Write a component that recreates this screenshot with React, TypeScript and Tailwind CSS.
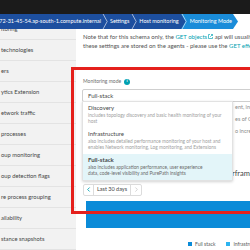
import { ChevronLeft, ChevronRight } from 'lucide-react'

const sideItems = [
  'technologies',
  'ers',
  'ytics Extension',
  'etwork traffic',
  'processes',
  'oup monitoring',
  'oup detection flags',
  're process grouping',
  'ailability',
  'stance snapshots'
]

const options = [
  {
    title: 'Discovery',
    lines: ['includes topology discovery and basic health monitoring of your', 'host'],
    active: false
  },
  {
    title: 'Infrastructure',
    lines: [
      'also includes detailed performance monitoring of your host and',
      'enables Network monitoring, Log monitoring, and Extensions'
    ],
    active: false
  },
  {
    title: 'Full-stack',
    lines: ['also includes application performance, user experience', 'data, code-level visibility and PurePath insights'],
    active: true
  }
]

function Sep({ from, to }: { from: string; to: string }) {
  return (
    <svg width="6" height="15" viewBox="0 0 6 15" className="shrink-0 block">
      <rect width="6" height="15" fill={to} />
      <polygon points="0,0 4.5,7.5 0,15" fill={from} />
      <polyline points="0.8,-0.5 5.2,7.5 0.8,15.5" fill="none" stroke="rgba(255,255,255,0.75)" strokeWidth="0.8" />
    </svg>
  )
}

function ExtIcon() {
  return (
    <svg width="5" height="5" viewBox="0 0 10 10" className="inline-block ml-[1px] mb-[1px]">
      <path d="M4 1H1v8h8V6M6 1h3v3M9 1 4.5 5.5" fill="none" stroke="#00a1b2" strokeWidth="1.3" />
    </svg>
  )
}

export default function App() {
  return (
    <div className="relative w-[250px] h-[250px] overflow-hidden bg-white font-['Lato',sans-serif] text-[#454646]">
      <div className="h-[14px] bg-[#1b1b1b]" />

      {/* breadcrumb */}
      <div className="flex h-[15px] text-[5.5px] leading-[15px] text-white whitespace-nowrap">
        <div className="w-[102px] shrink-0 overflow-hidden flex justify-end pr-[1px] bg-[#1d4f9f]">
          ip-172-31-45-54.ap-south-1.compute.internal
        </div>
        <Sep from="#1d4f9f" to="#1d4f9f" />
        <div className="pl-[2px] pr-[2px] bg-[#1d4f9f]">Settings</div>
        <Sep from="#1d4f9f" to="#1d4f9f" />
        <div className="pl-[2px] pr-[2px] bg-[#1d4f9f]">Host monitoring</div>
        <Sep from="#1d4f9f" to="#1a8cd9" />
        <div className="pl-[3px] pr-[1px] bg-[#1a8cd9]">Monitoring Mode</div>
        <svg width="6" height="15" viewBox="0 0 6 15" className="shrink-0 block">
          <polygon points="0,0 5,7.5 0,15" fill="#1a8cd9" />
        </svg>
      </div>

      <div className="flex h-[221px]">
        {/* sidebar */}
        <div className="w-[76px] shrink-0 bg-[#f2f2f2] text-[5.8px] whitespace-nowrap overflow-hidden">
          <div className="h-[11px] overflow-hidden border-b border-[#e3e3e3]">
            <div className="-mt-[10px] h-[21px] flex items-center pl-[1px]">itoring</div>
          </div>
          {sideItems.map((s) => (
            <div key={s} className="h-[21px] flex items-center pl-[1px] border-b border-[#e3e3e3]">
              {s}
            </div>
          ))}
        </div>

        {/* main */}
        <div className="w-[260px] shrink-0 pl-[6px] pt-[3px]">
          <div className="pl-[1px] text-[6px] leading-[9px] text-[#525252] whitespace-nowrap">
            <div>
              Note that for this schema only, the <span className="text-[#00a1b2]">GET objects</span>
              <ExtIcon /> api will usually not return
            </div>
            <div>
              these settings are stored on the agents - please use the{' '}
              <span className="text-[#00a1b2]">GET effective values</span>
            </div>
          </div>

          <div className="mt-[28px] pl-[1px] flex items-center gap-[3px] text-[5px] text-[#6f6f6f]">
            <span>Monitoring mode</span>
            <span className="w-[6px] h-[6px] rounded-full bg-[#00a1b2] text-white text-[4.5px] font-bold flex items-center justify-center">
              i
            </span>
          </div>

          <div className="relative mt-[3px]">
            <div className="h-[13px] border border-[#cfcfcf] rounded-[2px] pl-[5px] flex items-center text-[6px] text-[#454646]">
              Full-stack
            </div>

            {/* content behind dropdown */}
            <div className="text-[5.5px] text-[#8a8a8a] whitespace-nowrap">
              <div className="flex h-[12px] items-center">
                <span className="w-[153px] shrink-0" />
                <span>ent, including</span>
              </div>
              <div className="flex h-[12px] items-center">
                <span className="w-[153px] shrink-0" />
                <span>es of OneAgent</span>
              </div>
              <div className="flex h-[12px] items-center">
                <span className="w-[153px] shrink-0" />
                <span>o increase</span>
              </div>
            </div>
            <div className="mt-[31px] flex h-[10px] items-center text-[7.5px] text-[#454646] whitespace-nowrap">
              <span className="w-[150px] shrink-0" />
              <span>rframe</span>
            </div>

            <div className="mt-[5px] pl-[1px] flex">
              <div className="h-[12px] flex items-stretch border border-[#dcdcdc] rounded-[2px] text-[5.5px] text-[#454646]">
                <div className="w-[10px] flex items-center justify-center border-r border-[#dcdcdc]">
                  <ChevronLeft size={7} strokeWidth={3} color="#00a1b2" />
                </div>
                <div className="px-[3px] flex items-center whitespace-nowrap">Last 30 days</div>
                <div className="w-[11px] flex items-center justify-center border-l border-[#dcdcdc]">
                  <ChevronRight size={7} strokeWidth={2} color="#b5b5b5" />
                </div>
              </div>
            </div>

            <div className="mt-[5px] ml-[4px] h-[27px] bg-[#0b8bd8]" />

            <div className="mt-[13px] pl-[106px] flex items-center gap-[3px] text-[5px] text-[#5a5a5a] whitespace-nowrap">
              <span className="w-[4px] h-[4px] bg-[#0b8bd8]" />
              <span className="mr-[8px]">Full stack</span>
              <span className="w-[4px] h-[4px] bg-[#2db4f0]" />
              <span>Infrastructure</span>
            </div>

            {/* dropdown */}
            <div className="absolute left-0 top-[12px] w-[151px] bg-white border border-[#e2e2e2] rounded-b-[2px] shadow-[0_1px_3px_rgba(0,0,0,0.18)] whitespace-nowrap">
              {options.map((o) => (
                <div key={o.title} className={`px-[5px] pt-[2px] pb-[3px] ${o.active ? 'bg-[#e3f5f9]' : ''}`}>
                  <div className={`text-[6px] leading-[8px] text-[#454646] ${o.active ? 'font-bold' : ''}`}>{o.title}</div>
                  {o.lines.map((l) => (
                    <div key={l} className={`text-[4.8px] leading-[6.5px] ${o.active ? 'text-[#6b6b6b]' : 'text-[#a0a0a0]'}`}>
                      {l}
                    </div>
                  ))}
                </div>
              ))}
            </div>
          </div>
        </div>
      </div>

      {/* highlight frame */}
      <div className="absolute left-[71px] top-[67px] w-[200px] h-[147px] border-[3px] border-[#e5201c] pointer-events-none" />
    </div>
  )
}
